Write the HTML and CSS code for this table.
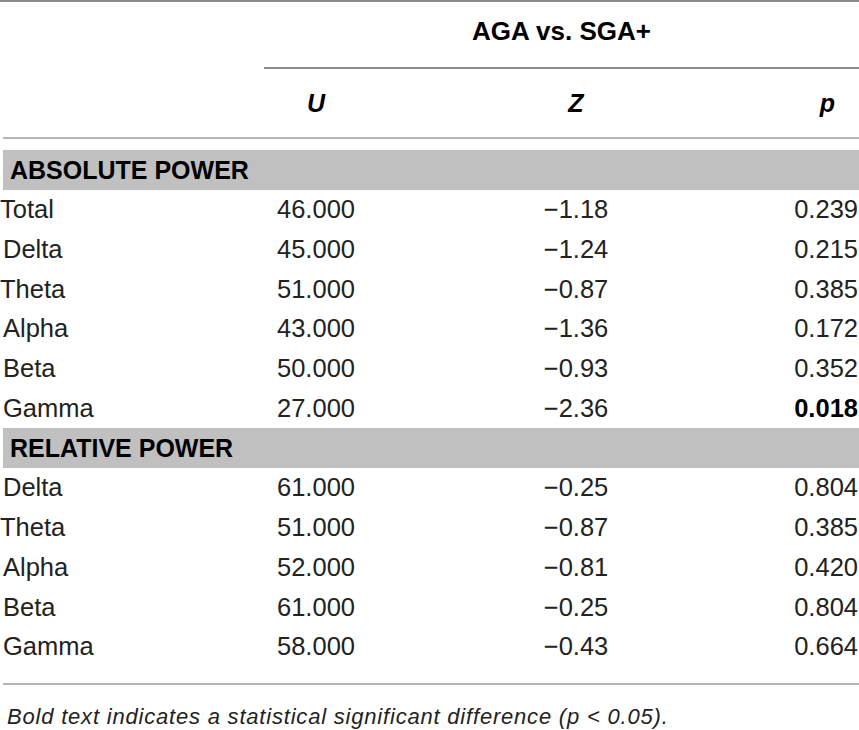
FILE: index.html
```html
<!DOCTYPE html>
<html>
<head>
<meta charset="utf-8">
<link rel="stylesheet" href="styles.css">
</head>
<body>
<div class="table">
  <div class="rule-top"></div>
  <div class="head1">
    <div class="spacer"></div>
    <div class="group">AGA vs. SGA+</div>
  </div>
  <div class="head2 grid">
    <div></div>
    <div class="c"><i>U</i></div>
    <div class="c"><i>Z</i></div>
    <div class="hp"><i>p</i></div>
  </div>
  <div class="rule-mid"></div>
  <div class="band">ABSOLUTE POWER</div>
  <div class="row grid"><div class="lab">Total</div><div class="c">46.000</div><div class="c">−1.18</div><div class="r">0.239</div></div>
  <div class="row grid"><div class="lab ind">Delta</div><div class="c">45.000</div><div class="c">−1.24</div><div class="r">0.215</div></div>
  <div class="row grid"><div class="lab">Theta</div><div class="c">51.000</div><div class="c">−0.87</div><div class="r">0.385</div></div>
  <div class="row grid"><div class="lab ind">Alpha</div><div class="c">43.000</div><div class="c">−1.36</div><div class="r">0.172</div></div>
  <div class="row grid"><div class="lab ind">Beta</div><div class="c">50.000</div><div class="c">−0.93</div><div class="r">0.352</div></div>
  <div class="row grid"><div class="lab ind">Gamma</div><div class="c">27.000</div><div class="c">−2.36</div><div class="r"><b>0.018</b></div></div>
  <div class="band">RELATIVE POWER</div>
  <div class="row grid"><div class="lab ind">Delta</div><div class="c">61.000</div><div class="c">−0.25</div><div class="r">0.804</div></div>
  <div class="row grid"><div class="lab">Theta</div><div class="c">51.000</div><div class="c">−0.87</div><div class="r">0.385</div></div>
  <div class="row grid"><div class="lab ind">Alpha</div><div class="c">52.000</div><div class="c">−0.81</div><div class="r">0.420</div></div>
  <div class="row grid"><div class="lab ind">Beta</div><div class="c">61.000</div><div class="c">−0.25</div><div class="r">0.804</div></div>
  <div class="row grid"><div class="lab ind">Gamma</div><div class="c">58.000</div><div class="c">−0.43</div><div class="r">0.664</div></div>
  <div class="rule-bottom"></div>
  <div class="note">Bold text indicates a statistical significant difference (p &lt; 0.05).</div>
</div>
</body>
</html>
```
FILE: styles.css
```css
html, body {
  margin: 0;
  padding: 0;
  background: #fff;
}
body {
  font-family: "Liberation Sans", Arial, sans-serif;
  font-size: 25px;
  color: #222;
  width: 859px;
  height: 730px;
  overflow: hidden;
}
.table {
  width: 859px;
}
.rule-top {
  height: 2px;
  background: #8a8a8a;
}
.head1 {
  display: flex;
  height: 67px;
}
.spacer {
  width: 264px;
}
.group {
  flex: 1;
  height: 67px;
  display: flex;
  align-items: center;
  justify-content: center;
  font-weight: bold;
  font-size: 26px;
  color: #000;
  border-bottom: 2px solid #8a8a8a;
  box-sizing: border-box;
  padding-bottom: 6px;
}
.grid {
  display: grid;
  grid-template-columns: 264px 104px 416px 75px;
  align-items: center;
}
.head2 {
  height: 68px;
  font-weight: bold;
  color: #000;
}
.head2 i {
  font-style: italic;
}
.c {
  text-align: center;
}
.r {
  text-align: right;
  padding-right: 1px;
}
.hp {
  text-align: right;
  padding-right: 24px;
}
.rule-mid {
  margin: 0 0 11px 3px;
  height: 2px;
  background: #b5b5b5;
}
.band {
  margin-left: 3px;
  height: 40px;
  background: #c0c0c0;
  font-weight: bold;
  font-size: 25px;
  line-height: 40px;
  padding-left: 7px;
  color: #000;
}
.row {
  height: 39.7px;
  font-size: 25.5px;
}
.lab.ind {
  padding-left: 3px;
}
.row b {
  font-weight: bold;
  color: #000;
}
.rule-bottom {
  margin: 16px 0 0 3px;
  height: 2px;
  background: #b5b5b5;
}
.note {
  font-style: italic;
  font-size: 22px;
  letter-spacing: 0.8px;
  line-height: 25px;
  color: #222;
  padding: 19px 0 0 7px;
}
```
